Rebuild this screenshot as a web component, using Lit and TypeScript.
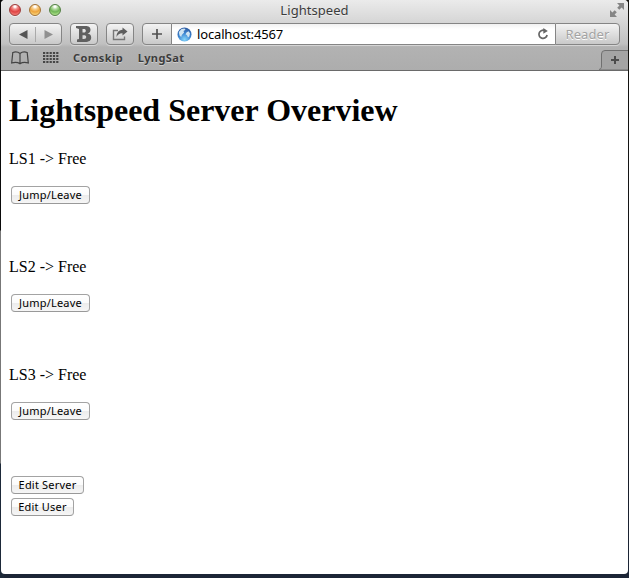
import { LitElement, html, css, svg } from "lit";
import { customElement, property } from "lit/decorators.js";

@customElement("push-button")
class PushButton extends LitElement {
  @property() label = "";
  @property({ type: Number }) width = 79;
  static styles = css`
    :host { display: block; }
    button {
      display: block; box-sizing: border-box; height: 18px; padding: 0; margin: 0;
      border: 1px solid #a3a3a3; border-bottom-color: #999; border-radius: 4px;
      background: linear-gradient(#fff 0%, #fbfbfb 48%, #ececec 52%, #f6f6f6 100%);
      font: 11px/14px "Noto Sans", sans-serif; letter-spacing: 0.2px; color: #000;
      white-space: nowrap; text-align: center;
    }
  `;
  render() {
    return html`<button style="width:${this.width}px">${this.label}</button>`;
  }
}

@customElement("browser-chrome")
class BrowserChrome extends LitElement {
  static styles = css`
    :host {
      display: block; height: 71px; box-sizing: border-box; border-bottom: 1px solid #6a6a6a;
      border-radius: 4px 4px 0 0; overflow: hidden;
      background: linear-gradient(#ebebeb 0, #d6d6d6 22px, #c0c0c0 44px, #b2b2b2 47px, #adadad 70px);
      font-family: "Noto Sans", sans-serif; color: #3c3c3c;
    }
    svg { display: block; }
    .title { height: 23px; display: grid; grid-template-columns: 61px 1fr 61px; align-items: start; }
    .lights { display: flex; gap: 8px; padding: 4px 0 0 8px; }
    .light { width: 12px; height: 12px; border-radius: 50%; box-sizing: border-box; border: 1px solid; box-shadow: 0 1px 0 #fff8; }
    .red { border-color: #9c3c3a; background: radial-gradient(circle at 50% 15%, #fff 0 8%, #f28b88 28%, #df4343 55%, #ff9b92 100%); }
    .amber { border-color: #a37132; background: radial-gradient(circle at 50% 15%, #fff 0 8%, #f9cf8c 28%, #eda43b 55%, #ffec9c 100%); }
    .green { border-color: #527f42; background: radial-gradient(circle at 50% 15%, #fff 0 8%, #b3dba0 28%, #70b657 55%, #d0f8a8 100%); }
    .name { font-size: 13px; line-height: 20px; text-align: center; letter-spacing: 0.05px; text-shadow: 0 1px 0 #fff8; }
    .full { justify-self: end; padding: 3px 4px 0 0; }
    .tools { height: 22px; display: flex; padding: 0 8px; }
    .tool {
      box-sizing: border-box; height: 22px; border: 1px solid #858585; border-radius: 4px;
      background: linear-gradient(#f3f3f3, #c9c9c9); display: flex; align-items: center; justify-content: center;
      box-shadow: 0 1px 0 #fff6;
    }
    .nav { width: 53px; margin-right: 8px; }
    .bold { width: 28px; margin-right: 8px; }
    .share { width: 28px; margin-right: 8px; }
    .add { width: 30px; border-radius: 4px 0 0 4px; }
    .field {
      flex: 1; box-sizing: border-box; height: 22px; border: solid #858585; border-width: 1px 0;
      background: linear-gradient(#f1f1f1, #fff 5px); display: flex; align-items: center; padding: 0 6px 0 5px;
      box-shadow: 0 1px 0 #fff6;
    }
    .url { flex: 1; margin-left: 5px; font-size: 13px; line-height: 20px; color: #000; letter-spacing: -0.15px; }
    .reader { width: 65px; border-radius: 0 4px 4px 0; font-size: 13px; line-height: 20px; color: #a3a3a3; text-shadow: 0 1px 0 #fff; letter-spacing: 0.1px; }
    .marks { height: 25px; display: flex; align-items: flex-start; padding-left: 10px; }
    .book { margin: 6px 14px 0 0; }
    .grid { margin: 7px 14px 0 0; }
    .mark { font-size: 11px; font-weight: 700; line-height: 15px; margin: 5px 14.600px 0 0; letter-spacing: 0.4px; text-shadow: 0 1px 0 #fff6; white-space: nowrap; }
    .tab { margin-left: auto; margin-top: 5px; }
  `;
  render() {
    const dots = [0, 1, 2, 3].flatMap((r) =>
      [0, 1, 2, 3, 4].map((c) => svg`<rect x=${c * 3.3} y=${r * 3} width="2.200" height="2" fill="#464646" />`));
    return html`
      <div class="title">
        <div class="lights"><i class="light red"></i><i class="light amber"></i><i class="light green"></i></div>
        <div class="name">Lightspeed</div>
        <svg class="full" width="14" height="14" viewBox="0 0 14 14" fill="#858585">
          <path d="M7 0h7v7l-2.400-2.400-2.300 2.200-2.100-2.100 2.200-2.300zM0 14V7l2.400 2.400 2.300-2.200 2.100 2.100-2.200 2.300L7 14z" />
        </svg>
      </div>
      <div class="tools">
        <div class="tool nav">
          <svg width="51" height="20" viewBox="0 0 51 20">
            <path d="M9 10.500 17.500 6v9z" fill="#555" /><path d="M25.500 3v15" stroke="#aaa" />
            <path d="M34.500 6 43 10.500 34.500 15z" fill="#909090" />
          </svg>
        </div>
        <div class="tool bold">
          <svg width="16" height="18" viewBox="0 0 16 18">
            <path fill="#606060" fill-rule="evenodd" d="M0 1h9c4 0 5.500 1.400 5.500 3.800 0 2-1 3.200-3 3.700 2.600.5 3.700 1.800 3.700 4C15.200 15.500 13 17 9 17H1v-2.500l2-.5V4L0 3zM6.500 4v3.500h1.300c1.500 0 2-.6 2-1.800S9.200 4 7.800 4zm0 6.200V14h1.500c1.600 0 2.200-.7 2.200-2s-.7-1.800-2.200-1.800z" />
          </svg>
        </div>
        <div class="tool share">
          <svg width="18" height="16" viewBox="0 0 18 16">
            <path d="M7 4.500H2.500v9h11V10.500" fill="none" stroke="#777" stroke-width="1.400" />
            <path d="M11.500 1.500l5 4-5 4V7.300C8.500 7.200 7 8.400 5.500 11c0-4.300 2-6.800 6-7.200z" fill="#5e5e5e" />
          </svg>
        </div>
        <div class="tool add">
          <svg width="12" height="12" viewBox="0 0 12 12"><path d="M6 1v10M1 6h10" stroke="#505050" stroke-width="1.700" /></svg>
        </div>
        <div class="field">
          <svg width="15" height="15" viewBox="0 0 15 15">
            <defs><radialGradient id="sea" cx=".5" cy=".85" r=".8"><stop stop-color="#86d6fa" /><stop offset=".55" stop-color="#3c86d2" /><stop offset="1" stop-color="#2f5fa6" /></radialGradient></defs>
            <circle cx="7.500" cy="7.500" r="7" fill="url(#sea)" />
            <path d="M1.800 5 4.500 2l3-.4 1 1.200-2 1.200.6 1.500L4.800 8 4.200 10 2.500 8.500zM9.500 5.500l2-1.300 1.500 2-.6 3-1.400 1.300-1-2.200-1.500-1z" fill="#cfe4f2" />
          </svg>
          <span class="url">localhost:4567</span>
          <svg width="12" height="12" viewBox="0 0 12 12">
            <path d="M8.500 3A4.100 4.100 0 1 0 10.100 7" fill="none" stroke="#666" stroke-width="1.700" /><path d="M6.300 0 10.800 3 6.300 5.800z" fill="#666" />
          </svg>
        </div>
        <div class="tool reader">Reader</div>
      </div>
      <div class="marks">
        <svg class="book" width="18" height="14" viewBox="0 0 18 14">
          <path d="M9 2.500C7 .8 4 .6 1.800 1.500L.7 12c3-.8 6-.8 8.300.8 2.300-1.600 5.300-1.600 8.300-.8L16.200 1.500C14 .6 11 .8 9 2.500zM9 2.500v10" fill="none" stroke="#444" stroke-width="1.200" />
        </svg>
        <svg class="grid" width="16" height="12" viewBox="0 0 16 12">${dots}</svg>
        <span class="mark">Comskip</span><span class="mark">LyngSat</span>
        <svg class="tab" width="29" height="20" viewBox="0 0 29 20">
          <path d="M-1 19.500C2 19.500 2.500 18 2.500 16V4Q2.500 .5 6 .5H30V20H0z" fill="#a4a4a4" stroke="#707070" />
          <path d="M16 6v8M12 10h8" stroke="#4c4c4c" stroke-width="2" />
        </svg>
      </div>`;
  }
}

@customElement("app-root")
class AppRoot extends LitElement {
  servers = ["LS1", "LS2", "LS3"];
  static styles = css`
    :host {
      display: block; box-sizing: border-box; height: 578px; padding: 0 1px 4px; overflow: hidden;
      background:
        linear-gradient(#0a0a0a 0, #0a0a0a 230px, #777 231px, #777 463px, #1d2939 464px) left / 4px 100% no-repeat,
        linear-gradient(#14130f 0, #14161c 400px, #1c2536 560px);
    }
    .window { height: 574px; background: #fff; border-radius: 4px; overflow: hidden; }
    .page { padding: 20px 8px 0; font: 16px/18px "Liberation Serif", serif; color: #000; }
    h1 { margin: 0; font-size: 32px; line-height: 38px; font-weight: 700; white-space: nowrap; }
    .server { height: 108px; }
    .status { margin: 0 0 18px; }
    .servers { padding-top: 21px; }
    push-button { margin-left: 2px; }
    .edit { display: flex; flex-direction: column; gap: 4px; padding-top: 2px; }
  `;
  render() {
    return html`
      <div class="window">
        <browser-chrome></browser-chrome>
        <div class="page">
          <h1>Lightspeed Server Overview</h1>
          <div class="servers">
            ${this.servers.map((s) => html`
              <div class="server">
                <p class="status">${s} -&gt; Free</p>
                <push-button label="Jump/Leave" .width=${79}></push-button>
              </div>`)}
          </div>
          <div class="edit">
            <push-button label="Edit Server" .width=${73}></push-button>
            <push-button label="Edit User" .width=${63}></push-button>
          </div>
        </div>
      </div>`;
  }
}
